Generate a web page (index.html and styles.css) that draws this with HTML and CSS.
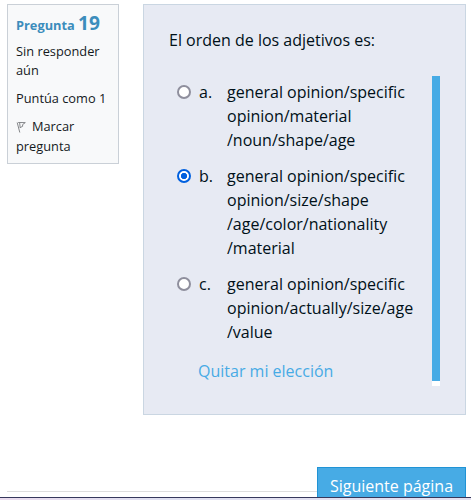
FILE: index.html
```html
<!DOCTYPE html>
<html lang="es">
<head>
<meta charset="utf-8">
<title>Pregunta 19</title>
<link rel="stylesheet" href="styles.css">
</head>
<body>
<main class="question">
  <aside class="info">
    <h3 class="number">Pregunta <span class="digits">19</span></h3>
    <p class="state">Sin responder<br>aún</p>
    <p class="grade">Puntúa como 1</p>
    <p class="mark"><svg class="flag" viewBox="0 0 11 14" width="11" height="14"><path d="M1.2 2.5 3.8 12.5M2.2 2.5 9.3 2.6 6.6 4.6 6.6 6.4 4 7.6M3.6 2.5 4.2 8" fill="none" stroke="#85878a" stroke-width="1"/></svg>Marcar<br>pregunta</p>
  </aside>
  <section class="panel">
    <p class="prompt">El orden de los adjetivos es:</p>
    <div class="scroller">
      <div class="answers">
        <label class="answer"><input class="radio" type="radio" name="q19"><span class="letter">a.</span><span>general opinion/specific<br>opinion/material<br>/noun/shape/age</span></label>
        <label class="answer"><input class="radio" type="radio" name="q19" checked><span class="letter">b.</span><span>general opinion/specific<br>opinion/size/shape<br>/age/color/nationality<br>/material</span></label>
        <label class="answer"><input class="radio" type="radio" name="q19"><span class="letter">c.</span><span>general opinion/specific<br>opinion/actually/size/age<br>/value</span></label>
        <a class="clear">Quitar mi elección</a>
      </div>
      <div class="track"><div class="thumb"></div></div>
    </div>
  </section>
</main>
<div class="actions"><div class="rule"></div><button class="next">Siguiente página</button></div>
<footer class="edge"></footer>
</body>
</html>
```
FILE: styles.css
```css
* { box-sizing: border-box; }
body {
  margin: 0;
  height: 500px;
  overflow: hidden;
  display: flex;
  flex-direction: column;
  background: #fff;
  color: #001018;
  font: 16px/24px "Open Sans", sans-serif;
}
p, h3 { margin: 0; }
.question {
  display: flex;
  align-items: flex-start;
  justify-content: space-between;
  height: 467px;
  flex: none;
  padding: 4px 5px 0 7px;
}
.info {
  width: 112px;
  height: 160px;
  padding: 7px 8px;
  border: 1px solid #cad0d7;
  background: #f8f9fa;
  color: #15191d;
  font-size: 12.8px;
  line-height: 19.5px;
}
.number {
  height: 25px;
  color: #3c8dbc;
  font-size: 12.8px;
  line-height: 22px;
  white-space: nowrap;
}
.digits { font-size: 19.2px; }
.state { margin-top: 5px; line-height: 19px; }
.grade { margin-top: 9px; white-space: nowrap; }
.mark { margin-top: 7.5px; line-height: 20px; }
.flag { margin-right: 5px; vertical-align: -3px; }
.panel {
  width: 323px;
  height: 411px;
  padding: 23px 25px 0;
  border: 1px solid #cad6e2;
  background: #e7eaf3;
}
.scroller { display: flex; height: 310px; margin-top: 24px; }
.answers { width: 263px; padding: 4px 0 0 8px; }
.answer {
  display: grid;
  grid-template-columns: 22px 28px 1fr;
  margin-bottom: 12px;
  white-space: nowrap;
}
.radio {
  appearance: none;
  width: 14px;
  height: 14px;
  margin: 5px 0 0;
  border: 2px solid #8f8f9d;
  border-radius: 50%;
  background: #fff;
}
.radio:checked {
  border-color: #0060df;
  background: radial-gradient(circle, #0060df 2.8px, #fff 3.5px);
}
.clear { display: block; margin: 15px 0 0 21px; color: #47abe5; }
.track { width: 8px; background: #fff; }
.thumb { height: 305px; background: #47abe5; }
.actions {
  display: flex;
  height: 30px;
  flex: none;
  overflow: hidden;
  padding: 0 5px 0 7px;
}
.rule { flex: 1; height: 25px; border-bottom: 1px solid #dedede; }
.next {
  width: 149px;
  height: 38px;
  flex: none;
  padding: 0;
  border: 1px solid #2093d5;
  background: #47abe5;
  color: #fff;
  font: 16px/24px "Open Sans", sans-serif;
}
.edge {
  height: 3px;
  flex: none;
  border-top: 1px solid #36385c;
  background: linear-gradient(90deg, #eadcee, #dedff0 35%, #e5e0f0);
}
```
